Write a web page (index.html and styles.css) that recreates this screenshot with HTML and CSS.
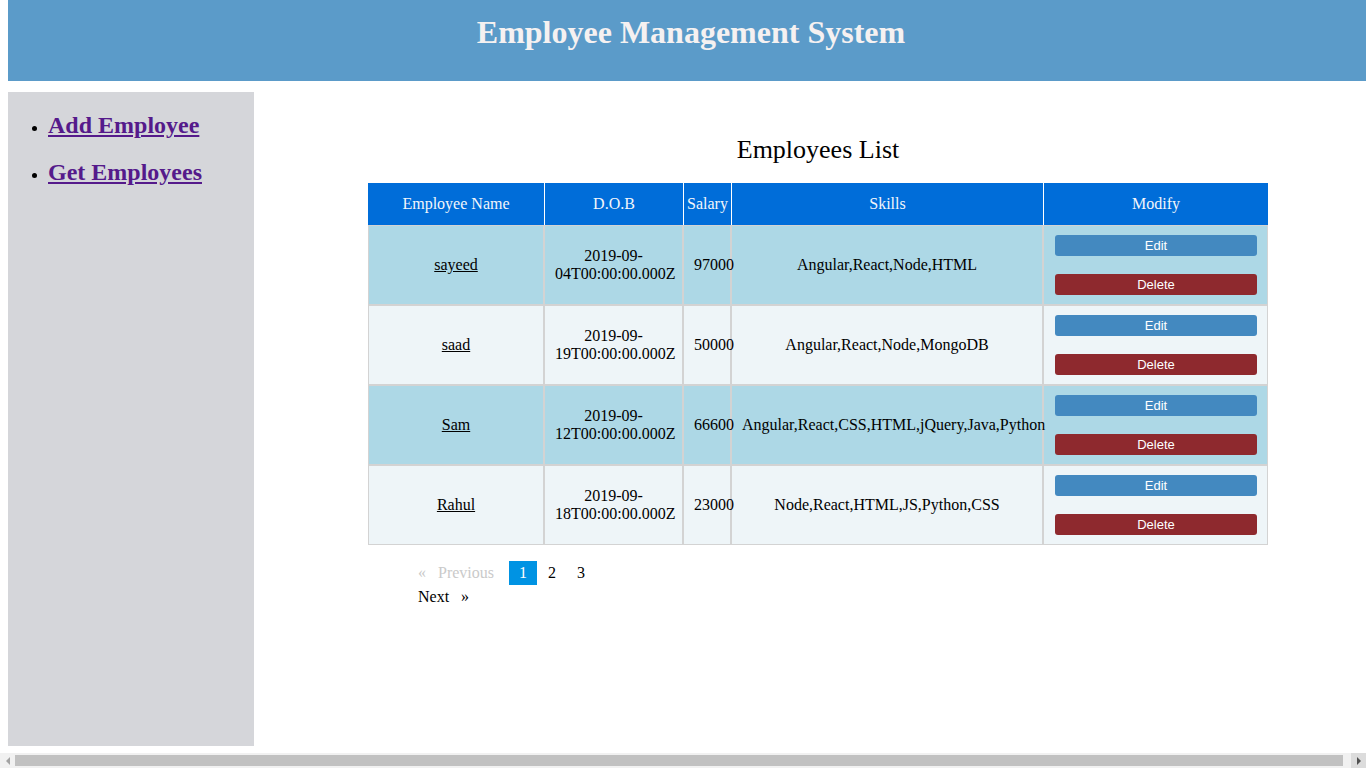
FILE: index.html
```html
<!DOCTYPE html>
<html>
<head>
<meta charset="utf-8">
<title>Employee Management System</title>
<link rel="stylesheet" href="styles.css">
</head>
<body>
<header class="topbar">
  <h1 class="app-title">Employee Management System</h1>
</header>
<div class="layout">
  <nav class="sidebar">
    <ul class="nav-list">
      <li><a class="nav-link" href="#">Add Employee</a></li>
      <li><a class="nav-link" href="#">Get Employees</a></li>
    </ul>
  </nav>
  <main class="main">
    <div class="content">
      <h2 class="list-title">Employees List</h2>
      <table class="emp-table">
        <colgroup>
          <col class="c-name"><col class="c-dob"><col class="c-sal"><col class="c-skills"><col class="c-mod">
        </colgroup>
        <thead>
          <tr>
            <th>Employee Name</th>
            <th>D.O.B</th>
            <th>Salary</th>
            <th>Skills</th>
            <th>Modify</th>
          </tr>
        </thead>
        <tbody>
          <tr class="row-odd">
            <td><a class="emp-link" href="#">sayeed</a></td>
            <td>2019-09-04T00:00:00.000Z</td>
            <td>97000</td>
            <td>Angular,React,Node,HTML</td>
            <td class="mod"><button class="btn btn-edit">Edit</button><button class="btn btn-delete">Delete</button></td>
          </tr>
          <tr class="row-even">
            <td><a class="emp-link" href="#">saad</a></td>
            <td>2019-09-19T00:00:00.000Z</td>
            <td>50000</td>
            <td>Angular,React,Node,MongoDB</td>
            <td class="mod"><button class="btn btn-edit">Edit</button><button class="btn btn-delete">Delete</button></td>
          </tr>
          <tr class="row-odd">
            <td><a class="emp-link" href="#">Sam</a></td>
            <td>2019-09-12T00:00:00.000Z</td>
            <td>66600</td>
            <td>Angular,React,CSS,HTML,jQuery,Java,Python</td>
            <td class="mod"><button class="btn btn-edit">Edit</button><button class="btn btn-delete">Delete</button></td>
          </tr>
          <tr class="row-even">
            <td><a class="emp-link" href="#">Rahul</a></td>
            <td>2019-09-18T00:00:00.000Z</td>
            <td>23000</td>
            <td>Node,React,HTML,JS,Python,CSS</td>
            <td class="mod"><button class="btn btn-edit">Edit</button><button class="btn btn-delete">Delete</button></td>
          </tr>
        </tbody>
      </table>
      <div class="pager-wrap">
        <ul class="pager">
          <li class="pg disabled prev"><span class="pg-label">Previous</span> </li>
          <li class="pg current">1</li><li class="pg"><a class="pg-link" href="#">2</a></li><li class="pg"><a class="pg-link" href="#">3</a></li>
          <li class="pg next"><a class="pg-link" href="#">Next</a></li>
        </ul>
      </div>
    </div>
  </main>
</div>
<div class="hscroll" aria-hidden="true">
  <span class="hs-btn hs-left"><span class="hs-arrow-l"></span></span>
  <span class="hs-track"><span class="hs-thumb"></span></span>
  <span class="hs-btn hs-right"><span class="hs-arrow-r"></span></span>
</div>
</body>
</html>
```
FILE: styles.css
```css
html, body {
  background: #ffffff;
}
body {
  margin: 0 0 0 8px;
  font-family: "Liberation Serif", "Times New Roman", serif;
  font-size: 16px;
  color: #000;
}
.topbar {
  width: 1366px;
  height: 81px;
  box-sizing: border-box;
  padding-top: 14px;
  background: #5b9bc9;
  text-align: center;
}
.app-title {
  margin: 0;
  font-size: 32px;
  font-weight: bold;
  color: #f5f1f1;
  line-height: normal;
}
.layout {
  display: flex;
  margin-top: 11px;
}
.sidebar {
  width: 246px;
  height: 654px;
  flex: none;
  background: #d5d6da;
}
.nav-list {
  margin: 19px 0 0;
  padding-left: 40px;
}
.nav-list li {
  line-height: 28px;
  margin-bottom: 16px;
}
.nav-link {
  font-size: 24px;
  font-weight: bold;
  color: #551a8b;
}
.main {
  flex: 1;
  padding: 43px 0 0 114px;
}
.content {
  width: 900px;
}
.list-title {
  margin: 0 0 18px;
  font-size: 26px;
  font-weight: normal;
  line-height: 30px;
  text-align: center;
}
.emp-table {
  width: 900px;
  table-layout: fixed;
  border-collapse: separate;
  border-spacing: 0;
}
.c-name { width: 176px; }
.c-dob { width: 139px; }
.c-sal { width: 48px; }
.c-skills { width: 312px; }
.c-mod { width: 225px; }
.emp-table th {
  background: #006dd9;
  color: #f3f6fb;
  font-weight: normal;
  height: 42px;
  box-sizing: border-box;
  padding: 0 2px;
  text-align: center;
  border-left: 1px solid #ffffff;
}
.emp-table th:first-child {
  border-left: none;
}
.emp-table td {
  height: 80px;
  box-sizing: border-box;
  padding: 10px;
  text-align: center;
  vertical-align: middle;
  border: 1px solid #d3d3d3;
  overflow: visible;
}
.row-odd td {
  background: #add8e6;
}
.row-even td {
  background: #eef5f8;
}
.emp-link {
  color: #000;
}
.emp-table td.mod {
  padding: 9px 10px 9px 11px;
  vertical-align: top;
}
.btn {
  display: block;
  width: 100%;
  height: 21px;
  padding: 0;
  border: none;
  border-radius: 3px;
  font-family: "Liberation Sans", Arial, sans-serif;
  font-size: 13px;
  color: #ffffff;
}
.btn-edit {
  background: #4389c0;
}
.btn-delete {
  margin-top: 18px;
  background: #8e292e;
}
.pager-wrap {
  width: 250px;
  margin-top: 16px;
}
.pager {
  margin: 0;
  padding-left: 40px;
  list-style: none;
}
.pg {
  display: inline-block;
  margin-right: 1px;
  padding: 3px 10px;
  line-height: 18px;
}
.pg-link {
  color: #000;
  text-decoration: none;
}
.disabled {
  color: #cacaca;
}
.prev::before {
  content: "«";
  display: inline-block;
  margin-right: 8px;
}
.prev .pg-label::before {
  content: " ";
}
.current {
  background: #0093e3;
  color: #fefefe;
}
.next .pg-link::after {
  content: "»";
  display: inline-block;
  margin-left: 12px;
}
.hscroll {
  position: fixed;
  left: 0;
  right: 0;
  bottom: 0;
  height: 15px;
  display: flex;
  background: #f1f1f1;
}
.hs-btn {
  width: 15px;
  height: 15px;
  flex: none;
  display: flex;
  align-items: center;
  justify-content: center;
}
.hs-right {
  width: 15px;
  background: #dcdcdc;
}
.hs-track {
  flex: 1;
  display: flex;
  align-items: center;
  padding-right: 8px;
}
.hs-thumb {
  flex: 1;
  height: 11px;
  background: #c1c1c1;
}
.hs-arrow-l {
  width: 0;
  height: 0;
  border-top: 4px solid transparent;
  border-bottom: 4px solid transparent;
  border-right: 4px solid #a3a3a3;
}
.hs-arrow-r {
  width: 0;
  height: 0;
  border-top: 4px solid transparent;
  border-bottom: 4px solid transparent;
  border-left: 4px solid #505050;
}
```
